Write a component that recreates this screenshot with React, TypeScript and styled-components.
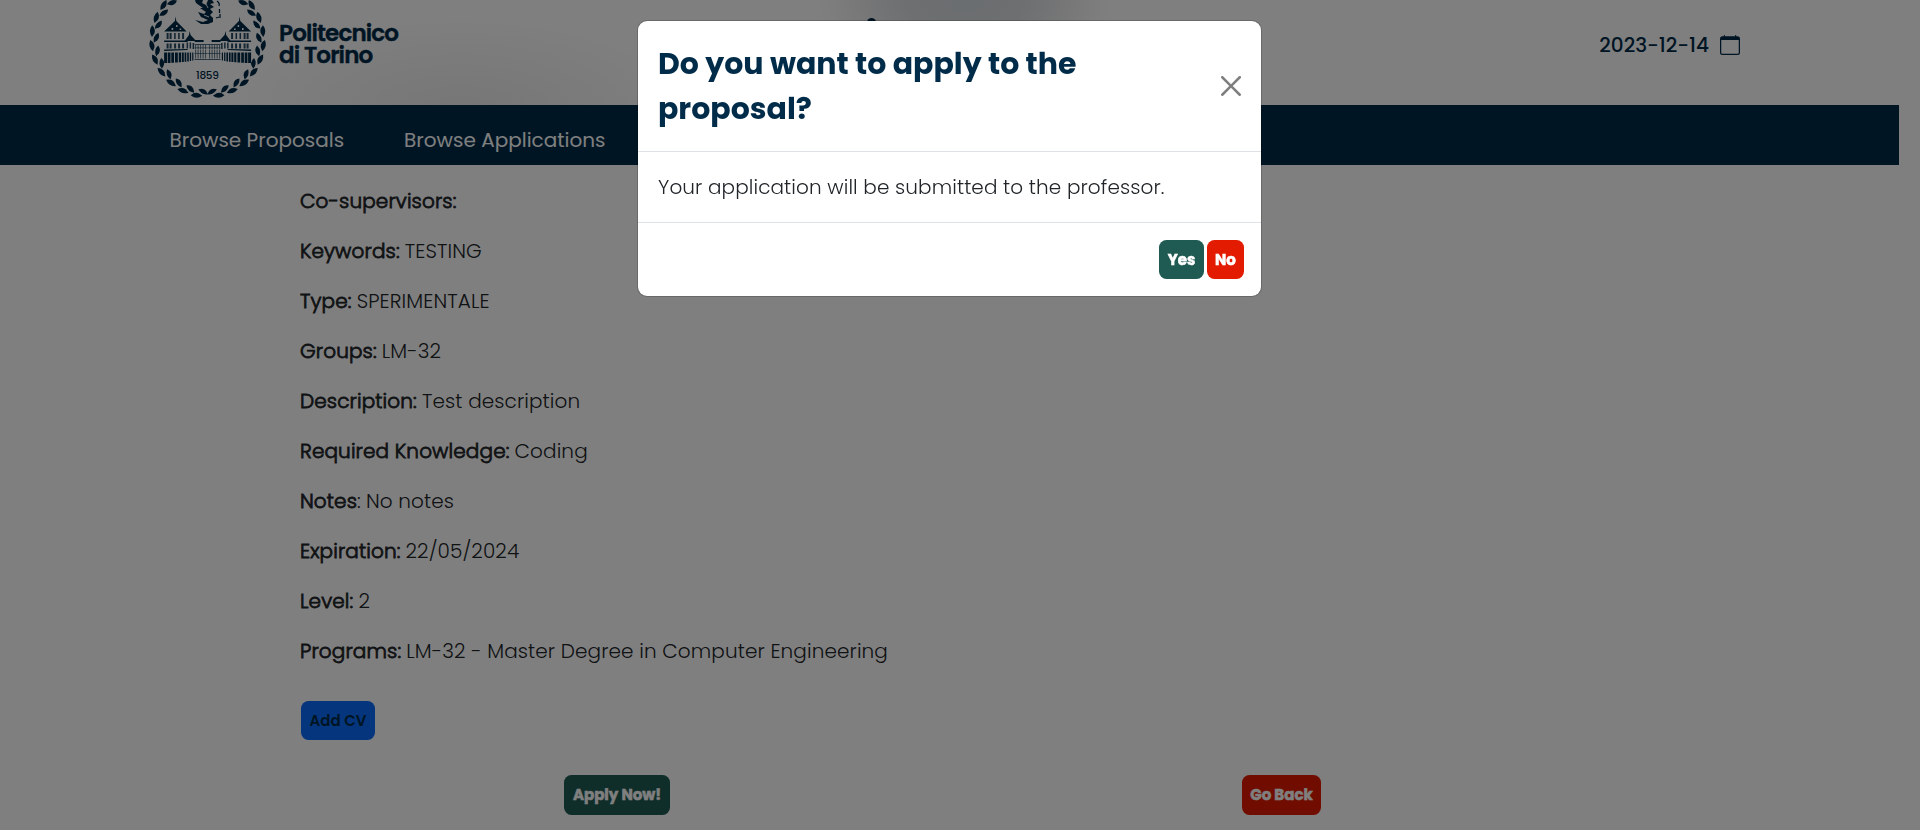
import React from 'react';
import styled, { createGlobalStyle } from 'styled-components';
import { BsCalendar } from 'react-icons/bs';

const navy = '#002b49';

const GlobalStyle = createGlobalStyle`
  *, *::before, *::after { box-sizing: border-box; }
  body {
    margin: 0;
    overflow: hidden;
    background: #fff;
    color: #212529;
    font: 300 20px/30px Poppins, Montserrat, 'Open Sans', sans-serif;
  }
`;

const Page = styled.div`
  height: 830px;
  padding-right: 21px;
  overflow: hidden;
`;

const Header = styled.header`
  display: flex;
  align-items: flex-start;
  justify-content: space-between;
  height: 105px;
  padding: 0 159px 0 145px;
  background:
    radial-gradient(ellipse 150px 100px at 965px -4px, rgba(172, 184, 191, 0.5) 0%, rgba(176, 185, 191, 0.46) 40%, rgba(180, 183, 185, 0.22) 70%, rgba(190, 190, 190, 0.06) 90%, transparent 100%),
    radial-gradient(ellipse 240px 100px at 460px 115px, rgba(120, 120, 120, 0.14), transparent);
`;

const Brand = styled.div`
  display: flex;
  gap: 9px;
  width: 255px;
`;

const Wordmark = styled.div`
  padding-top: 22px;
  color: ${navy};
  font-size: 23px;
  font-weight: 600;
  line-height: 22px;
  letter-spacing: -0.85px;
  white-space: nowrap;
  -webkit-text-stroke: 0.4px currentColor;
`;

const Crest = styled.svg`
  width: 125px;
  height: 105px;
  fill: ${navy};
`;

const TitleDot = styled.span`
  width: 9px;
  height: 9px;
  margin: 18px auto 0 467px;
  border-radius: 50%;
  background: ${navy};
`;

const DateBox = styled.div`
  display: flex;
  gap: 11px;
  padding-top: 30px;
  color: ${navy};
  font-weight: 500;

  svg { margin-top: 5px; }
`;

const Nav = styled.nav`
  display: flex;
  gap: 60px;
  height: 60px;
  padding: 20px 169.5px 0;
  background: ${navy};
`;

const NavLink = styled.a`
  color: #fff;
  font-weight: 400;
`;

const Details = styled.dl`
  display: grid;
  gap: 20px;
  margin: 0;
  padding: 21px 300px 0;
  letter-spacing: 0.11px;
`;

const Detail = styled.div`
  display: flex;
  gap: 5px;
`;

const Label = styled.dt`
  letter-spacing: 0.14px;
  -webkit-text-stroke: 0.8px currentColor;
`;

const Plain = styled.span`
  -webkit-text-stroke: 0;
`;

const Value = styled.dd`
  margin: 0;
`;

const tones = {
  green: { bg: '#1f5b52', fg: '#fff' },
  red: { bg: '#e31b00', fg: '#fff' },
  blue: { bg: '#0a6bfa', fg: navy },
};

const Button = styled.button<{ $tone: keyof typeof tones; $width: number; $height?: number }>`
  width: ${p => p.$width}px;
  height: ${p => p.$height ?? 39}px;
  padding: 0;
  border: 0;
  border-radius: 7.5px;
  background: ${p => tones[p.$tone].bg};
  color: ${p => tones[p.$tone].fg};
  font: ${p => (p.$tone === 'blue' ? 600 : 700)} 15px/22px Poppins, Montserrat, sans-serif;
  white-space: nowrap;
  -webkit-text-stroke: ${p => (p.$tone === 'blue' ? '0' : '0.5px')} currentColor;
`;

const Upload = styled.div`
  display: flex;
  padding: 35px 301px 0;
`;

const Actions = styled.div`
  display: flex;
  gap: 572px;
  padding: 35px 0 0 564px;
`;

const Backdrop = styled.div`
  position: fixed;
  inset: 0;
  background: rgba(0, 0, 0, 0.5);
`;

const Modal = styled.section`
  position: fixed;
  top: 20px;
  left: 637px;
  width: 625px;
  border: 1px solid rgba(0, 0, 0, 0.175);
  border-radius: 10px;
  background: #fff;
  background-clip: padding-box;
`;

const ModalHeader = styled.div`
  display: flex;
  align-items: center;
  justify-content: space-between;
  padding: 20px;
  border-bottom: 1px solid #dee2e6;
`;

const ModalTitle = styled.h4`
  width: 460px;
  margin: 0;
  color: ${navy};
  font-size: 30px;
  font-weight: 700;
  line-height: 45px;
`;

const Close = styled.button`
  display: flex;
  padding: 0;
  border: 0;
  background: none;
  opacity: 0.5;
`;

const ModalBody = styled.div`
  padding: 20px;
  letter-spacing: 0.1px;
`;

const ModalFooter = styled.div`
  display: flex;
  justify-content: flex-end;
  gap: 3px;
  padding: 17px;
  border-top: 1px solid #dee2e6;
`;

const details: [string, string, boolean?][] = [
  ['Co-supervisors', ''],
  ['Keywords', 'TESTING'],
  ['Type', 'SPERIMENTALE'],
  ['Groups', 'LM-32'],
  ['Description', 'Test description'],
  ['Required Knowledge', 'Coding'],
  ['Notes', 'No notes', true],
  ['Expiration', '22/05/2024'],
  ['Level', '2'],
  ['Programs', 'LM-32 - Master Degree in Computer Engineering'],
];

const leafAngles = Array.from({ length: 10 }, (_, i) => 11.4 + i * 14.6);

/* One half of the laurel wreath; the other half is its mirror image. */
function Laurel() {
  return (
    <>
      {leafAngles.map((deg, i) => {
        const a = (deg * Math.PI) / 180;
        const b = ((deg - 6.5) * Math.PI) / 180;
        return (
          <g key={i}>
            <path
              d="M-5.800 0Q-2-3.800 2-2.400L5.800 0Q0 4.400-5.800 0Z"
              transform={`translate(${-Math.sin(a) * 56.2} ${Math.cos(a) * 56.6}) rotate(${deg - 8})`}
            />
            <path
              d="M-5.400 0Q-2-3.800 2-2.200L5.400 0Q0 4-5.400 0Z"
              transform={`translate(${-Math.sin(b) * 51.6} ${Math.cos(b) * 52}) rotate(${deg + 16})`}
            />
          </g>
        );
      })}
    </>
  );
}

/* Left wing of the castle, in coordinates measured from the crest's centre line. */
function Wing() {
  return (
    <>
      <path d="M-32-24.500L-31.300-20L-21-9.500H-43.500L-32.700-20Z" />
      <path d="M-36-13h1.600v2H-36zM-31.500-16h1.400v2h-1.400zM-28-12.500h1.600v1.600h-1.600z" fill="#fff" />
      <path d="M-41-8h2v6h-2zM-38-8h2v6h-2zM-33.500-8h1.600v6h-1.600zM-29.500-8h1.600v6h-1.600zM-25.500-8h2v6h-2z" opacity=".85" />
      <path d="M-43.500-.5L-20-.5V1H-43.500Z" />
      <path d="M-41 2.500h2v5h-2zM-38 2.500h2v5h-2zM-33.500 2.500h2v5h-2zM-29.500 2.500h2v5h-2zM-25.500 2.500h2v5h-2z" opacity=".85" />
      <path d="M-43.500 8.500L-20 8V9L-43.500 10Z" />
      <path d="M-43.500 11.500h3V22h-3zM-39.800 11.500h2.700v10.400h-2.700zM-36.300 11.500h2.700v10.300h-2.700zM-32.600 11.500h2.800v10h-2.800zM-28.800 11.500h2.200v9.800h-2.200zM-25.800 11.500h2v9.500h-2zM-23 11.500h1.700v9.200H-23zM-20.400 11.500h1.600v8.900h-1.600zM-17.800 11.500h1.300v8.500h-1.300zM-15.400 11.500h1.200v8h-1.200z" />
      <path d="M-18-10L-17-6L-11.500 0H-23L-18.600-6Z" />
      <path d="M-21 1.500h1.500v6H-21zM-18 1.500h1.500v6H-18zM-15 2h1.500v6H-15z" opacity=".85" />
      <path d="M-14-1H-4V1H-12.500Z" />
      <path d="M-13 3H0v1H-13zM-13 6.500H0v.8H-13zM-13 12H0v.8H-13zM-13 18H0v.9H-13z" opacity=".7" />
      <path d="M-12 4v4M-9.500 4v4M-7 4v4M-4.500 4v4M-2 4v4M-12 8.500v9M-9.500 8.500v9M-7 8.500v9M-4.500 8.500v9M-2 8.500v9" stroke="#002b49" strokeWidth=".8" opacity=".8" />
    </>
  );
}

function Seal() {
  return (
    <Crest viewBox="145 0 125 105" aria-label="Crest">
      <g transform="translate(207.600 40)"><Laurel /></g>
      <g transform="translate(207.600 40) scale(-1 1)"><Laurel /></g>
      <g transform="translate(207.600 41)"><Wing /></g>
      <g transform="translate(207.600 41) scale(-1 1)"><Wing /></g>
      <path d="M195 0H203L202 3L206 5L208 0H212L214 3L210 4L214 7L210 9L213 12L210 15L213 18L213 22L208 24L201 24L195 20L203 22L208 20L201 17L198 12L204 14L206 12L200 8L203 8L196 3Z" />
      <path d="M205 2l3 6M204 15l5 2" stroke="#fff" strokeWidth=".9" />
      <path d="M217 1q3 2 2 5M219.500 9v4M216 18l3-1M220 14v4" fill="none" stroke="#002b49" strokeWidth="1.300" />
      <text x="196" y="79" fontSize="10.500" fontWeight="500" textLength="23">1859</text>
    </Crest>
  );
}

export default function App() {
  return (
    <>
      <GlobalStyle />
      <Page>
        <Header>
          <Brand>
            <Seal />
            <Wordmark>Politecnico<br />di Torino</Wordmark>
          </Brand>
          <TitleDot />
          <DateBox>2023-12-14 <BsCalendar size={20} /></DateBox>
        </Header>
        <Nav>
          <NavLink>Browse Proposals</NavLink>
          <NavLink>Browse Applications</NavLink>
        </Nav>
        <Details>
          {details.map(([label, value, plainColon]) => (
            <Detail key={label}>
              <Label>{label}{plainColon ? <Plain>:</Plain> : ':'}</Label>
              <Value>{value}</Value>
            </Detail>
          ))}
        </Details>
        <Upload><Button $tone="blue" $width={74}>Add CV</Button></Upload>
        <Actions>
          <Button $tone="green" $width={106} $height={40}>Apply Now!</Button>
          <Button $tone="red" $width={79} $height={40}>Go Back</Button>
        </Actions>
      </Page>
      <Backdrop />
      <Modal role="dialog">
        <ModalHeader>
          <ModalTitle>Do you want to apply to the proposal?</ModalTitle>
          <Close aria-label="Close">
            <svg width="20" height="20" viewBox="0 0 16 16">
              <path d="M.293.293a1 1 0 0 1 1.414 0L8 6.586 14.293.293a1 1 0 1 1 1.414 1.414L9.414 8l6.293 6.293a1 1 0 0 1-1.414 1.414L8 9.414l-6.293 6.293a1 1 0 0 1-1.414-1.414L6.586 8 .293 1.707a1 1 0 0 1 0-1.414z" />
            </svg>
          </Close>
        </ModalHeader>
        <ModalBody>Your application will be submitted to the professor.</ModalBody>
        <ModalFooter>
          <Button $tone="green" $width={45}>Yes</Button>
          <Button $tone="red" $width={37}>No</Button>
        </ModalFooter>
      </Modal>
    </>
  );
}
